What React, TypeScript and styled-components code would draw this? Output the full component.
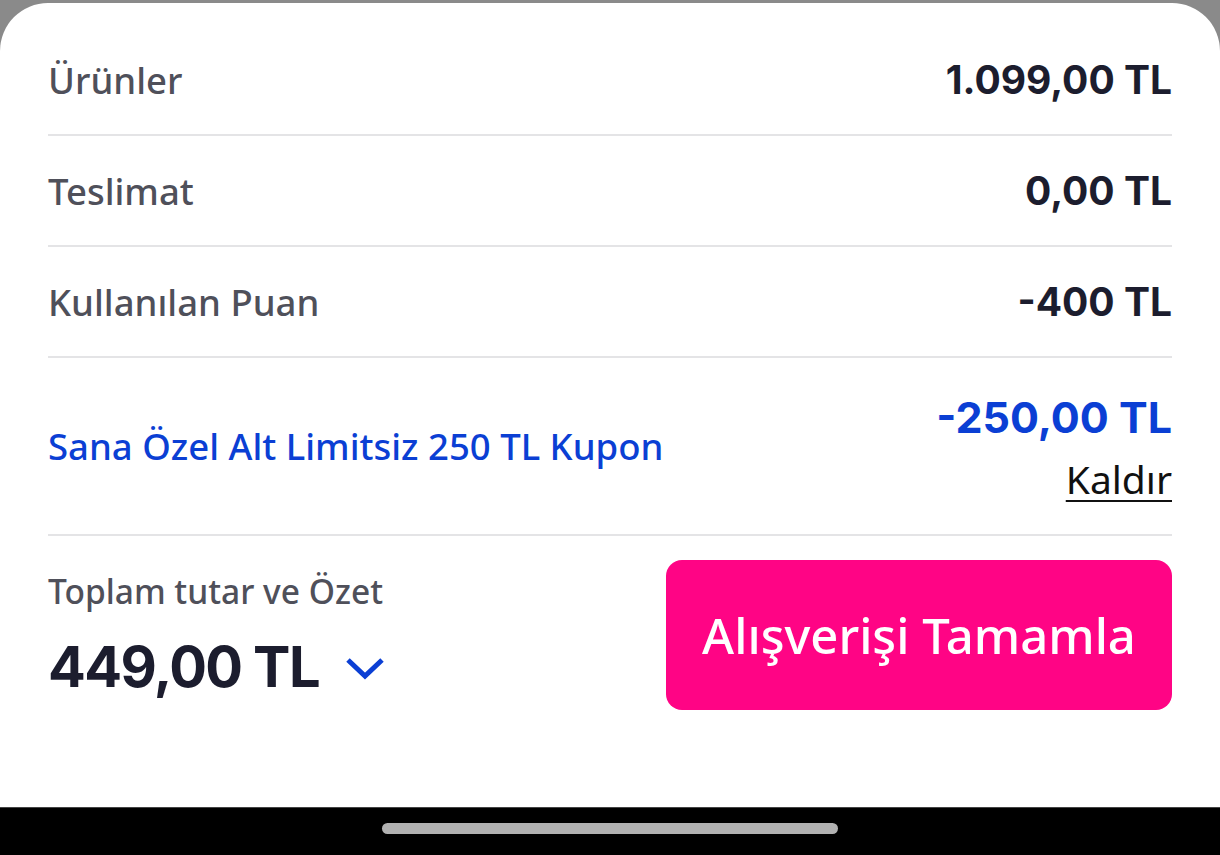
import React from 'react';
import styled, { createGlobalStyle } from 'styled-components';

const Global = createGlobalStyle`
  html, body { margin: 0; padding: 0; }
  body {
    background: #8a8a8a;
    font-family: "Noto Sans", "Open Sans", sans-serif;
  }
`;

const Screen = styled.div`
  width: 1220px;
  height: 855px;
  display: flex;
  flex-direction: column;
  background: #8a8a8a;
  overflow: hidden;
`;

const Sheet = styled.div`
  flex: 1;
  margin-top: 3px;
  background: #fff;
  border-radius: 48px 48px 0 0;
  padding: 22px 48px 0 48px;
  display: flex;
  flex-direction: column;
`;

const Row = styled.div<{ tall?: boolean }>`
  height: ${p => (p.tall ? 176 : 109)}px;
  display: flex;
  align-items: center;
  justify-content: space-between;
  border-bottom: 2px solid #e4e4e6;
`;

const Label = styled.div<{ accent?: boolean }>`
  font-size: 36.5px;
  font-weight: 500;
  color: ${p => (p.accent ? '#0b3fd4' : '#4f505a')};
`;

const Value = styled.div<{ accent?: boolean }>`
  font-family: Inter, "Open Sans", sans-serif;
  font-size: ${p => (p.accent ? 43 : 39)}px;
  font-weight: 700;
  color: ${p => (p.accent ? '#0b3fd4' : '#1c1d2e')};
`;

const CouponRight = styled.div`
  display: flex;
  flex-direction: column;
  align-items: flex-end;
  gap: 9px;
  margin-top: 4px;
`;

const RemoveLink = styled.a`
  font-size: 39px;
  color: #111;
  text-decoration: underline;
  text-underline-offset: 6px;
  text-decoration-thickness: 2px;
  cursor: pointer;
`;

const Footer = styled.div`
  display: flex;
  align-items: center;
  justify-content: space-between;
  padding-top: 24px;
`;

const TotalBox = styled.div`
  display: flex;
  flex-direction: column;
  gap: 22px;
  margin-top: 2px;
`;

const TotalCaption = styled.div`
  font-size: 33.5px;
  font-weight: 500;
  line-height: 1.2;
  color: #4f505a;
`;

const TotalLine = styled.div`
  display: flex;
  align-items: center;
  gap: 26px;
`;

const TotalAmount = styled.div`
  font-family: Inter, "Open Sans", sans-serif;
  font-size: 56px;
  font-weight: 700;
  line-height: 1.2;
  letter-spacing: -1.6px;
  color: #1c1d2e;
`;

const Chevron = styled.svg`
  width: 40px;
  height: 28px;
  margin-top: 2px;
`;

const CheckoutButton = styled.button`
  width: 506px;
  height: 150px;
  border: none;
  border-radius: 16px;
  background: #ff0485;
  color: #fff;
  font-family: "Noto Sans", "Open Sans", sans-serif;
  font-size: 49px;
  font-weight: 500;
  cursor: pointer;
`;

const NavBar = styled.div`
  height: 48px;
  background: #000;
  border-top: 1px solid #444;
  display: flex;
  justify-content: center;
  padding-top: 15px;
  box-sizing: border-box;
`;

const HomeIndicator = styled.div`
  width: 456px;
  height: 11px;
  border-radius: 6px;
  background: #b1b1b1;
`;

export default function App() {
  return (
    <Screen>
      <Global />
      <Sheet>
        <Row>
          <Label>Ürünler</Label>
          <Value>1.099,00 TL</Value>
        </Row>
        <Row>
          <Label>Teslimat</Label>
          <Value>0,00 TL</Value>
        </Row>
        <Row>
          <Label>Kullanılan Puan</Label>
          <Value>-400 TL</Value>
        </Row>
        <Row tall>
          <Label accent>Sana Özel Alt Limitsiz 250 TL Kupon</Label>
          <CouponRight>
            <Value accent>-250,00 TL</Value>
            <RemoveLink>Kaldır</RemoveLink>
          </CouponRight>
        </Row>
        <Footer>
          <TotalBox>
            <TotalCaption>Toplam tutar ve Özet</TotalCaption>
            <TotalLine>
              <TotalAmount>449,00 TL</TotalAmount>
              <Chevron viewBox="0 0 40 28">
                <path d="M3 6 L20 22 L37 6" fill="none" stroke="#0b3fd4" strokeWidth="5" />
              </Chevron>
            </TotalLine>
          </TotalBox>
          <CheckoutButton>Alışverişi Tamamla</CheckoutButton>
        </Footer>
      </Sheet>
      <NavBar>
        <HomeIndicator />
      </NavBar>
    </Screen>
  );
}
